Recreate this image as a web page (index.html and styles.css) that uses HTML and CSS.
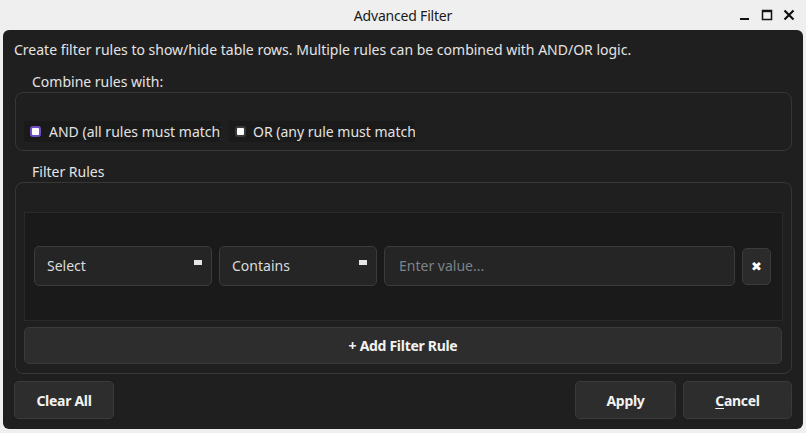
FILE: index.html
```html
<!DOCTYPE html>
<html>
<head>
<meta charset="utf-8">
<link rel="stylesheet" href="styles.css">
</head>
<body>
<div class="titlebar">
  <div class="title">Advanced Filter</div>
  <div class="controls">
    <svg width="12" height="12" viewBox="0 0 12 12"><rect x="1" y="9" width="9" height="2" fill="#111"/></svg>
    <svg width="12" height="12" viewBox="0 0 12 12"><rect x="1.5" y="1.5" width="9" height="9" fill="none" stroke="#111" stroke-width="1.5"/><rect x="1" y="1" width="10" height="2.2" fill="#111"/></svg>
    <svg width="12" height="12" viewBox="0 0 12 12"><path d="M1.5 1.5 L10.5 10.5 M10.5 1.5 L1.5 10.5" stroke="#111" stroke-width="2.2"/></svg>
  </div>
</div>
<div class="window">
  <div class="desc">Create filter rules to show/hide table rows. Multiple rules can be combined with AND/OR logic.</div>
  <div class="glabel first">Combine rules with:</div>
  <div class="group group-combine">
    <div class="radios">
      <div class="radio r-and"><span class="box checked"></span><span class="rtext">AND (all rules must match)</span></div>
      <div class="radio r-or"><span class="box"></span><span class="rtext">OR (any rule must match)</span></div>
    </div>
  </div>
  <div class="glabel second">Filter Rules</div>
  <div class="group group-rules">
    <div class="scroll">
      <div class="rule">
        <div class="combo c1"><span>Select</span><i class="arrow"></i></div>
        <div class="combo c2"><span>Contains</span><i class="arrow"></i></div>
        <div class="input">Enter value...</div>
        <div class="del">✖</div>
      </div>
    </div>
    <div class="btn add">+ Add Filter Rule</div>
  </div>
  <div class="footer">
    <div class="btn b-clear">Clear All</div>
    <div class="spacer"></div>
    <div class="btn b-apply">Apply</div>
    <div class="btn b-cancel"><u>C</u>ancel</div>
  </div>
</div>
</body>
</html>
```

FILE: styles.css
```css
* { box-sizing: border-box; }
html, body { margin: 0; padding: 0; }
body {
  width: 806px;
  height: 433px;
  background: #efefef;
  font-family: "Noto Sans", "Open Sans", sans-serif;
  font-size: 14px;
  overflow: hidden;
}
.titlebar {
  height: 30px;
  position: relative;
  display: flex;
  align-items: center;
  justify-content: center;
}
.title {
  font-family: "Noto Sans", sans-serif;
  font-stretch: condensed;
  font-size: 14px;
  color: #1a1a1a;
  letter-spacing: -0.2px;
}
.controls {
  position: absolute;
  right: 11px;
  top: 9px;
  display: flex;
  gap: 10px;
}
.window {
  margin: 0 3px;
  height: 399px;
  background: #1f1f1f;
  border-radius: 6px;
  padding: 10px 11px 0 11px;
  display: flex;
  flex-direction: column;
  color: #e2e2e2;
}
.desc {
  line-height: 20px;
  height: 20px;
  white-space: nowrap;
  color: #e4e4e4;
}
.glabel {
  line-height: 20px;
  height: 20px;
  padding-left: 18px;
  color: #e4e4e4;
}
.glabel.first { margin-top: 12px; }
.glabel.second { margin-top: 11px; }
.group {
  margin-left: 1px;
  width: 777px;
  border: 1px solid #363636;
  border-radius: 8px;
  padding: 28px 8px 0 8px;
}
.group-combine { height: 59px; margin-top: 0; }
.group-rules { height: 192px; margin-top: 0; padding-top: 29px; }
.radios { display: flex; gap: 8px; }
.radio {
  height: 21px;
  background: #1a1a1a;
  display: flex;
  align-items: center;
  padding-left: 6px;
  overflow: hidden;
  white-space: nowrap;
  color: #e2e2e2;
}
.r-and { width: 197px; }
.r-or { width: 186px; }
.box {
  width: 11px;
  height: 11px;
  border-radius: 3px;
  background: #fff;
  border: 2px solid #3a3a3a;
  margin-right: 8px;
  flex: none;
}
.box.checked { border-color: #6e4fc6; }
.r-or .box { margin-right: 7px; }
.scroll {
  height: 109px;
  background: #1a1a1a;
  border: 1px solid #2a2a2a;
  padding: 33px 10px 0 9px;
}
.rule { display: flex; gap: 7px; align-items: center; }
.combo, .input {
  height: 40px;
  background: #252525;
  border: 1px solid #3b3b3b;
  border-radius: 5px;
  display: flex;
  align-items: center;
  padding: 0 0 1px 12px;
  position: relative;
  color: #dcdcdc;
}
.c1 { width: 178px; }
.c2 { width: 158px; }
.input { width: 351px; color: #7c838b; padding-left: 14px; }
.arrow {
  position: absolute;
  right: 9px;
  top: 13px;
  width: 8px;
  height: 5px;
  background: #e6e6e6;
}
.del {
  width: 29px;
  height: 37px;
  background: #2b2b2b;
  border: 1px solid #3b3b3b;
  border-radius: 5px;
  display: flex;
  align-items: center;
  justify-content: center;
  color: #fff;
  font-family: "DejaVu Sans", sans-serif;
  font-size: 13px;
}
.btn {
  height: 38px;
  background: #2d2d2d;
  border: 1px solid #3a3a3a;
  border-radius: 5px;
  display: flex;
  align-items: center;
  justify-content: center;
  font-weight: 700;
  font-stretch: condensed;
  letter-spacing: -0.3px;
  color: #f2f2f2;
}
.btn u { text-decoration: underline; text-underline-offset: 2px; }
.add { margin-top: 6px; width: 758px; height: 37px; }
.footer {
  margin-top: 7px;
  display: flex;
  gap: 7px;
}
.spacer { flex: 1; }
.b-clear { width: 100px; }
.b-apply { width: 101px; }
.b-cancel { width: 109px; }
```
